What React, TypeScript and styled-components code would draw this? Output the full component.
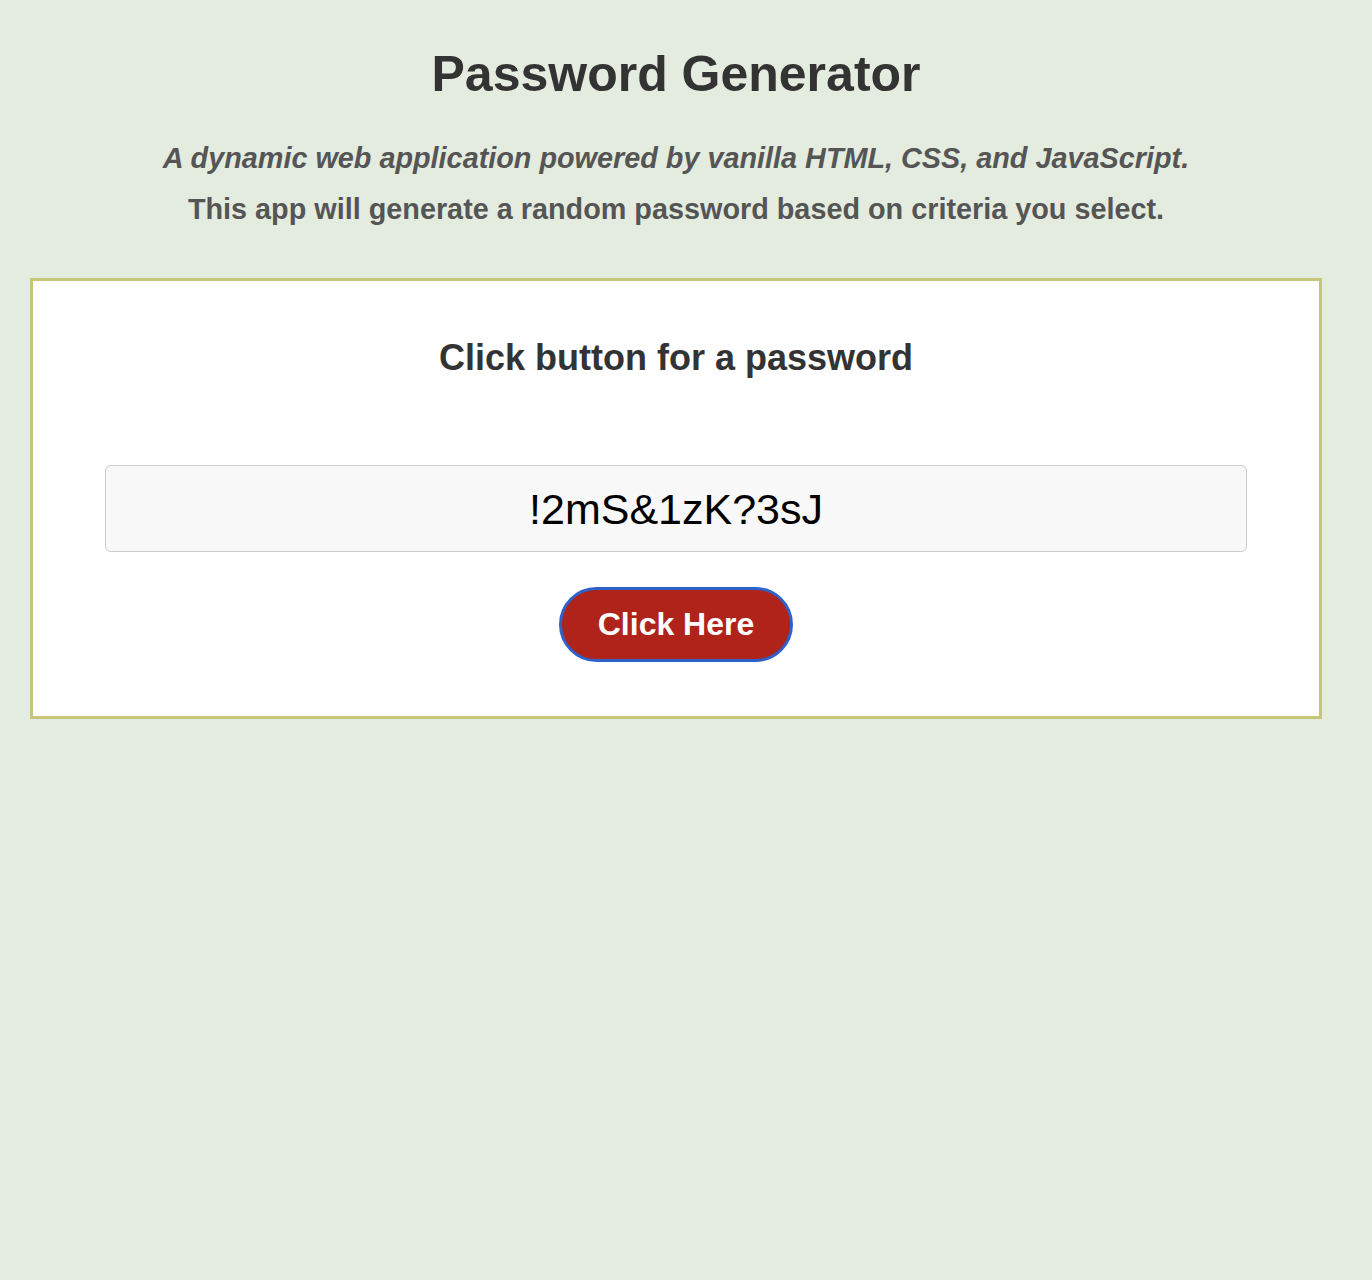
import React from "react";
import styled, { createGlobalStyle } from "styled-components";

const GlobalStyle = createGlobalStyle`
  html, body {
    margin: 0;
    padding: 0;
    background: #e4ecdf;
    font-family: "Liberation Sans", Arial, Helvetica, sans-serif;
  }
`;

const Page = styled.div`
  min-height: 1280px;
  box-sizing: border-box;
  padding: 44px 50px 0 30px;
  display: flex;
  flex-direction: column;
  align-items: stretch;
`;

const Header = styled.header`
  display: flex;
  flex-direction: column;
  align-items: center;
  text-align: center;
`;

const Title = styled.h1`
  margin: 0;
  font-size: 50px;
  line-height: 60px;
  font-weight: 700;
  color: #333333;
`;

const Tagline = styled.p<{ $italic?: boolean }>`
  margin: ${(p) => (p.$italic ? "37px 0 0" : "17px 0 0")};
  font-size: 28.8px;
  line-height: 34px;
  font-weight: 700;
  font-style: ${(p) => (p.$italic ? "italic" : "normal")};
  color: #555555;
`;

const Card = styled.section`
  margin-top: 52px;
  background: #ffffff;
  border: 3px solid #c6c67a;
  padding: 56px 72px 54px;
  display: flex;
  flex-direction: column;
  align-items: center;
`;

const CardTitle = styled.h2`
  margin: 0;
  font-size: 36px;
  line-height: 42px;
  font-weight: 700;
  color: #333333;
`;

const Output = styled.textarea`
  margin-top: 86px;
  width: 100%;
  height: 87px;
  box-sizing: border-box;
  background: #f8f8f8;
  border: 1px solid #cccccc;
  border-radius: 6px;
  resize: none;
  font-family: "Liberation Sans", Arial, Helvetica, sans-serif;
  font-size: 43px;
  line-height: 50px;
  color: #000000;
  text-align: center;
  padding: 18px 10px;
  overflow: hidden;
  outline: none;
`;

const GenerateButton = styled.button`
  margin-top: 35px;
  background: #b0231a;
  color: #ffffff;
  border: 3px solid #2f62c9;
  border-radius: 40px;
  font-family: "Liberation Sans", Arial, Helvetica, sans-serif;
  font-size: 32px;
  font-weight: 700;
  line-height: 38px;
  padding: 15px 36px 16px;
  cursor: pointer;
`;

export default function App() {
  return (
    <>
      <GlobalStyle />
      <Page>
        <Header>
          <Title>Password Generator</Title>
          <Tagline $italic>
            A dynamic web application powered by vanilla HTML, CSS, and JavaScript.
          </Tagline>
          <Tagline>This app will generate a random password based on criteria you select.</Tagline>
        </Header>
        <Card>
          <CardTitle>Click button for a password</CardTitle>
          <Output readOnly value="!2mS&1zK?3sJ" />
          <GenerateButton>Click Here</GenerateButton>
        </Card>
      </Page>
    </>
  );
}
